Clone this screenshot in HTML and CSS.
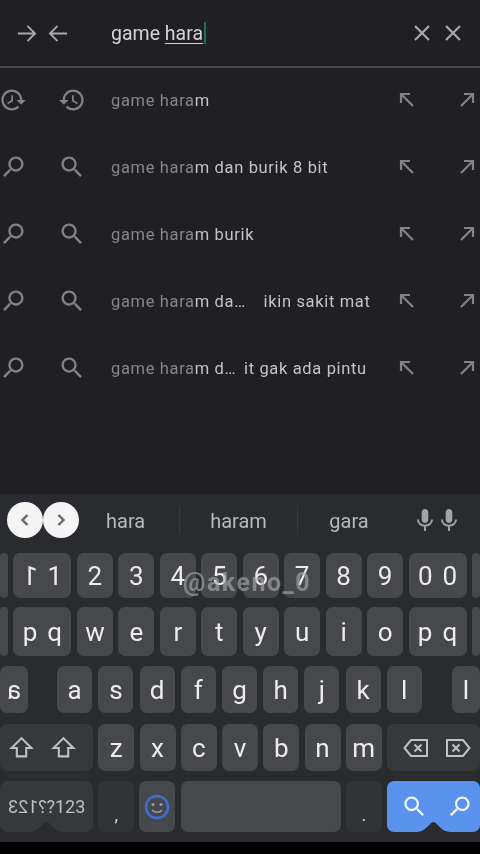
FILE: index.html
```html
<!DOCTYPE html>
<html lang="en">
<head>
<meta charset="UTF-8">
<meta name="viewport" content="width=device-width, initial-scale=1.0">
<title>Search</title>
<link rel="stylesheet" href="styles.css">
</head>
<body>
<svg class="defs" width="0" height="0">
    <symbol id="i-search" viewBox="0 0 24 24"><path d="M15.5 14h-.79l-.28-.27C15.41 12.59 16 11.11 16 9.5 16 5.91 13.09 3 9.5 3S3 5.91 3 9.5 5.91 16 9.5 16c1.61 0 3.09-.59 4.23-1.57l.27.28v.79l5 4.99L20.49 19l-4.99-5zm-6 0C7.01 14 5 11.99 5 9.5S7.01 5 9.5 5 14 7.01 14 9.5 11.99 14 9.5 14z"/></symbol>
    <symbol id="i-history" viewBox="0 0 24 24"><path d="M13 3c-4.97 0-9 4.03-9 9H1l3.89 3.89.07.14L9 12H6c0-3.87 3.13-7 7-7s7 3.13 7 7-3.13 7-7 7c-1.93 0-3.68-.79-4.94-2.06l-1.42 1.42C8.27 19.99 10.51 21 13 21c4.97 0 9-4.03 9-9s-4.03-9-9-9zm-1 5v5l4.28 2.54.72-1.21-3.5-2.08V8H12z"/></symbol>
    <symbol id="i-fill" viewBox="0 0 18 18"><path d="M3 12V3h9M3 3l12 12" fill="none" stroke="currentColor" stroke-width="2.200"/></symbol>
    <symbol id="i-arrow" viewBox="0 0 22 22"><path d="M2 11h18M12 3l8 8-8 8" fill="none" stroke="currentColor" stroke-width="2"/></symbol>
    <symbol id="i-close" viewBox="0 0 20 20"><path d="M3 3l14 14M17 3L3 17" fill="none" stroke="currentColor" stroke-width="2.200"/></symbol>
    <symbol id="i-mic" viewBox="0 0 24 24"><path d="M12 15c1.900 0 3.300-1.500 3.300-3.400V4.400C15.300 2.500 13.900 1 12 1S8.700 2.500 8.700 4.400v7.200C8.700 13.500 10.100 15 12 15z"/><path d="M5 11.500c0 3.700 3.100 6.200 7 6.200s7-2.500 7-6.200M12 17.500V23" fill="none" stroke="currentColor" stroke-width="2"/></symbol>
    <symbol id="i-shift" viewBox="0 0 24 24"><path d="M12 3L2.500 12.500H7.500V20.500H16.500V12.500H21.500z" fill="none" stroke="currentColor" stroke-width="2"/></symbol>
    <symbol id="i-back" viewBox="0 0 26 22"><path d="M8 3H24V19H8L1.500 11z" fill="none" stroke="currentColor" stroke-width="2"/><path d="M11.500 7.500l7 7M18.500 7.500l-7 7" fill="none" stroke="currentColor" stroke-width="2"/></symbol>
    <symbol id="i-chevron" viewBox="0 0 12 16"><path d="M8.500 3L3.500 8l5 5" fill="none" stroke="currentColor" stroke-width="2.400"/></symbol>
</svg>

<div class="app">
    <header class="search-bar">
        <svg class="ic-arrow"><use href="#i-arrow"/></svg>
        <svg class="ic-arrow flip"><use href="#i-arrow"/></svg>
        <div class="query">game <u>hara</u><span class="caret"></span></div>
        <svg class="ic-close"><use href="#i-close"/></svg>
        <svg class="ic-close"><use href="#i-close"/></svg>
    </header>

    <ul class="results">
        <li class="result">
            <svg class="ic-lead flip"><use href="#i-history"/></svg>
            <svg class="ic-lead"><use href="#i-history"/></svg>
            <div class="result-text"><span class="dim">game hara</span>m</div>
            <svg class="ic-fill"><use href="#i-fill"/></svg>
            <svg class="ic-fill flip"><use href="#i-fill"/></svg>
        </li>
        <li class="result">
            <svg class="ic-lead flip"><use href="#i-search"/></svg>
            <svg class="ic-lead"><use href="#i-search"/></svg>
            <div class="result-text"><span class="dim">game hara</span>m dan burik 8 bit</div>
            <svg class="ic-fill"><use href="#i-fill"/></svg>
            <svg class="ic-fill flip"><use href="#i-fill"/></svg>
        </li>
        <li class="result">
            <svg class="ic-lead flip"><use href="#i-search"/></svg>
            <svg class="ic-lead"><use href="#i-search"/></svg>
            <div class="result-text"><span class="dim">game hara</span>m burik</div>
            <svg class="ic-fill"><use href="#i-fill"/></svg>
            <svg class="ic-fill flip"><use href="#i-fill"/></svg>
        </li>
        <li class="result">
            <svg class="ic-lead flip"><use href="#i-search"/></svg>
            <svg class="ic-lead"><use href="#i-search"/></svg>
            <div class="result-text"><span class="dim">game hara</span>m da… <span class="tail-wide">ikin sakit mat</span></div>
            <svg class="ic-fill"><use href="#i-fill"/></svg>
            <svg class="ic-fill flip"><use href="#i-fill"/></svg>
        </li>
        <li class="result">
            <svg class="ic-lead flip"><use href="#i-search"/></svg>
            <svg class="ic-lead"><use href="#i-search"/></svg>
            <div class="result-text"><span class="dim">game hara</span>m d… <span class="tail">it gak ada pintu</span></div>
            <svg class="ic-fill"><use href="#i-fill"/></svg>
            <svg class="ic-fill flip"><use href="#i-fill"/></svg>
        </li>
    </ul>

    <section class="keyboard">
        <div class="suggest">
            <div class="nav-btns">
                <span class="nav-btn"><svg class="ic-chevron"><use href="#i-chevron"/></svg></span>
                <span class="nav-btn"><svg class="ic-chevron flip"><use href="#i-chevron"/></svg></span>
            </div>
            <span class="word word-a">hara</span>
            <span class="word word-b">haram</span>
            <span class="word word-c">gara</span>
            <svg class="ic-mic"><use href="#i-mic"/></svg>
            <svg class="ic-mic"><use href="#i-mic"/></svg>
        </div>

        <div class="row row-1">
            <div class="key w-edge"></div>
            <div class="key w-double"><span class="mirror">1</span><span>1</span></div>
            <div class="key w-one">2</div>
            <div class="key w-one">3</div>
            <div class="key w-one">4</div>
            <div class="key w-one">5</div>
            <div class="key w-one">6</div>
            <div class="key w-one">7</div>
            <div class="key w-one">8</div>
            <div class="key w-one">9</div>
            <div class="key w-double"><span>0</span><span>0</span></div>
            <div class="key w-edge"></div>
        </div>
        <div class="row row-2">
            <div class="key w-edge"></div>
            <div class="key w-double"><span>p</span><span>q</span></div>
            <div class="key w-one">w</div>
            <div class="key w-one">e</div>
            <div class="key w-one">r</div>
            <div class="key w-one">t</div>
            <div class="key w-one">y</div>
            <div class="key w-one">u</div>
            <div class="key w-one">i</div>
            <div class="key w-one">o</div>
            <div class="key w-double"><span>p</span><span>q</span></div>
            <div class="key w-edge"></div>
        </div>
        <div class="row row-3">
            <div class="key w-side"><span class="mirror">a</span></div>
            <div class="key w-one">a</div>
            <div class="key w-one">s</div>
            <div class="key w-one">d</div>
            <div class="key w-one">f</div>
            <div class="key w-one">g</div>
            <div class="key w-one">h</div>
            <div class="key w-one">j</div>
            <div class="key w-one">k</div>
            <div class="key w-one">l</div>
            <div class="key w-side">l</div>
        </div>
        <div class="row row-4">
            <div class="key key-dark w-wide pad-l"><svg class="ic-shift"><use href="#i-shift"/></svg><svg class="ic-shift"><use href="#i-shift"/></svg></div>
            <div class="key w-one">z</div>
            <div class="key w-one">x</div>
            <div class="key w-one">c</div>
            <div class="key w-one">v</div>
            <div class="key w-one">b</div>
            <div class="key w-one">n</div>
            <div class="key w-one">m</div>
            <div class="key key-dark w-wide pad-r"><svg class="ic-back"><use href="#i-back"/></svg><svg class="ic-back flip"><use href="#i-back"/></svg></div>
        </div>
        <div class="row row-5">
            <div class="key key-dark w-wide key-sym notch"><span class="mirror">?123</span><span>?123</span></div>
            <div class="key key-dim w-one key-punct">,</div>
            <div class="key w-one">
                <svg class="ic-emoji" viewBox="0 0 26 26">
                    <circle cx="13" cy="13" r="11" fill="none" stroke="#3f6fd0" stroke-width="2.500"/>
                    <circle cx="9" cy="10.500" r="1.600" fill="#8a9db8"/>
                    <circle cx="17" cy="10.500" r="1.600" fill="#8a9db8"/>
                    <path d="M8 16c2.500 3 7.500 3 10 0" fill="none" stroke="#8a9db8" stroke-width="1.600"/>
                </svg>
            </div>
            <div class="key w-space"></div>
            <div class="key key-dim w-one key-punct">.</div>
            <div class="key key-go w-wide notch"><svg class="ic-go"><use href="#i-search"/></svg><svg class="ic-go flip"><use href="#i-search"/></svg></div>
        </div>
    </section>

    <div class="bottom-strip"></div>
    <div class="watermark">@akeno_0</div>
</div>
</body>
</html>
```

FILE: styles.css
```css
* {
    box-sizing: border-box;
}
html, body {
    margin: 0;
    padding: 0;
    background-color: #000;
}
.defs {
    position: absolute;
}
.app {
    position: relative;
    width: 480px;
    height: 854px;
    display: flex;
    flex-direction: column;
    overflow: hidden;
    background-color: #201f23;
    font-family: Roboto, 'Liberation Sans', sans-serif;
    filter: blur(0.4px);
}
svg {
    fill: currentColor;
    flex: none;
}
.flip {
    transform: scaleX(-1);
}

/* search bar */
.search-bar {
    height: 68px;
    flex: none;
    display: flex;
    align-items: center;
    padding-left: 16px;
    border-bottom: 2px solid #49494c;
    color: #a9a9ab;
}
.ic-arrow {
    width: 21px;
    height: 21px;
    margin-right: 11px;
}
.query {
    flex: 1;
    margin-left: 31px;
    font-size: 19.500px;
    color: #d4d4d6;
    display: flex;
    align-items: center;
    white-space: pre;
}
.query u {
    text-underline-offset: 3px;
}
.caret {
    width: 2px;
    height: 22px;
    margin-left: 1px;
    background-color: #1c6e64;
}
.ic-close {
    width: 20px;
    height: 20px;
    margin-right: 11px;
}
.ic-close:last-child {
    margin-right: 17px;
}

/* suggestions */
.results {
    list-style: none;
    margin: 0;
    padding: 0;
    flex: 1;
}
.result {
    height: 67px;
    display: flex;
    align-items: center;
    padding-bottom: 3px;
    color: #838285;
}
.ic-lead {
    width: 28px;
    height: 28px;
}
.ic-lead:first-child {
    margin-left: -1px;
    margin-right: 31px;
}
.result-text {
    flex: 1;
    margin-left: 25px;
    font-size: 16.500px;
    letter-spacing: 0.65px;
    color: #c4c4c6;
    white-space: pre;
}
.dim {
    color: #868588;
}
.tail-wide {
    margin-left: 13px;
}
.tail {
    margin-left: 3px;
}
.ic-fill {
    width: 18px;
    height: 18px;
    margin-right: 42px;
}
.ic-fill.flip {
    margin-right: 4px;
}

/* keyboard */
.keyboard {
    height: 349px;
    flex: none;
    background-color: #292b2f;
    border-top: 1px solid #1b1c1f;
}
.suggest {
    height: 59px;
    display: flex;
    align-items: center;
    padding: 0 0 7px 7px;
    color: #b8b9bb;
}
.nav-btns {
    display: flex;
    width: 99px;
}
.nav-btn {
    width: 36px;
    height: 36px;
    display: flex;
    align-items: center;
    justify-content: center;
    border-radius: 50%;
    background-color: #f5f5f5;
    color: #66676b;
}
.ic-chevron {
    width: 12px;
    height: 16px;
}
.word {
    width: 118px;
    padding-top: 2px;
    font-size: 20px;
    text-align: center;
    border-right: 1px solid #36383c;
    line-height: 26px;
}
.word-a {
    width: 74px;
    text-align: left;
}
.word-c {
    border-right: 0;
    width: 102px;
}
.ic-mic {
    width: 24px;
    height: 24px;
    color: #a2a3a6;
}
.word-c + .ic-mic {
    margin-left: 13px;
}
.row {
    display: flex;
    justify-content: space-between;
}
.row-1 {
    height: 45px;
}
.row-2 {
    height: 49px;
    margin-top: 9px;
}
.row-3 {
    height: 47px;
    margin-top: 10px;
}
.row-4 {
    height: 47px;
    margin-top: 11px;
}
.row-5 {
    height: 51px;
    margin-top: 10px;
}
.key {
    position: relative;
    display: flex;
    align-items: center;
    justify-content: center;
    border-radius: 7px;
    background-color: #47484c;
    color: #ececee;
    font-size: 26px;
}
.w-edge {
    width: 8px;
}
.w-one {
    width: 36px;
}
.w-double {
    width: 58px;
    gap: 10px;
}
.w-side {
    width: 28px;
}
.row-3 .w-one {
    width: 35px;
}
.row-3 .w-side + .w-one {
    margin-left: 23px;
}
.row-3 .w-one:nth-child(10) {
    margin-right: 24px;
}
.w-wide {
    width: 93px;
}
.w-space {
    width: 160px;
}
.mirror {
    display: inline-block;
    transform: scaleX(-1);
}
.key-dark {
    background-color: #36383c;
    color: #c0c1c3;
    justify-content: space-between;
}
.key-dim {
    background-color: #313337;
    color: #d4d4d6;
}
.pad-l {
    padding: 0 17px 0 9px;
}
.pad-r {
    padding: 0 9px 0 16px;
}
.ic-shift {
    width: 25px;
    height: 25px;
}
.ic-back {
    width: 26px;
    height: 22px;
}
.key-sym {
    justify-content: center;
    font-size: 18px;
}
.key-punct {
    align-items: flex-end;
    padding-bottom: 7px;
    font-size: 18px;
}
.ic-emoji {
    width: 26px;
    height: 26px;
}
.key-go {
    justify-content: space-between;
    padding: 0 7px 0 14px;
    background-color: #5a93ee;
    color: #f2f5fa;
}
.ic-go {
    width: 27px;
    height: 27px;
}
.notch::after {
    content: "";
    position: absolute;
    left: 50%;
    bottom: 0;
    width: 34px;
    height: 10px;
    margin-left: -17px;
    background-color: #292b2f;
    clip-path: path('M0 10 C10 10 13 0 17 0 C21 0 24 10 34 10 Z');
}
.bottom-strip {
    height: 12px;
    flex: none;
    background-color: #000;
}
.watermark {
    position: absolute;
    left: 183px;
    top: 568px;
    font-size: 25px;
    font-weight: 700;
    letter-spacing: 1.5px;
    color: rgba(170, 171, 175, 0.62);
}
```
